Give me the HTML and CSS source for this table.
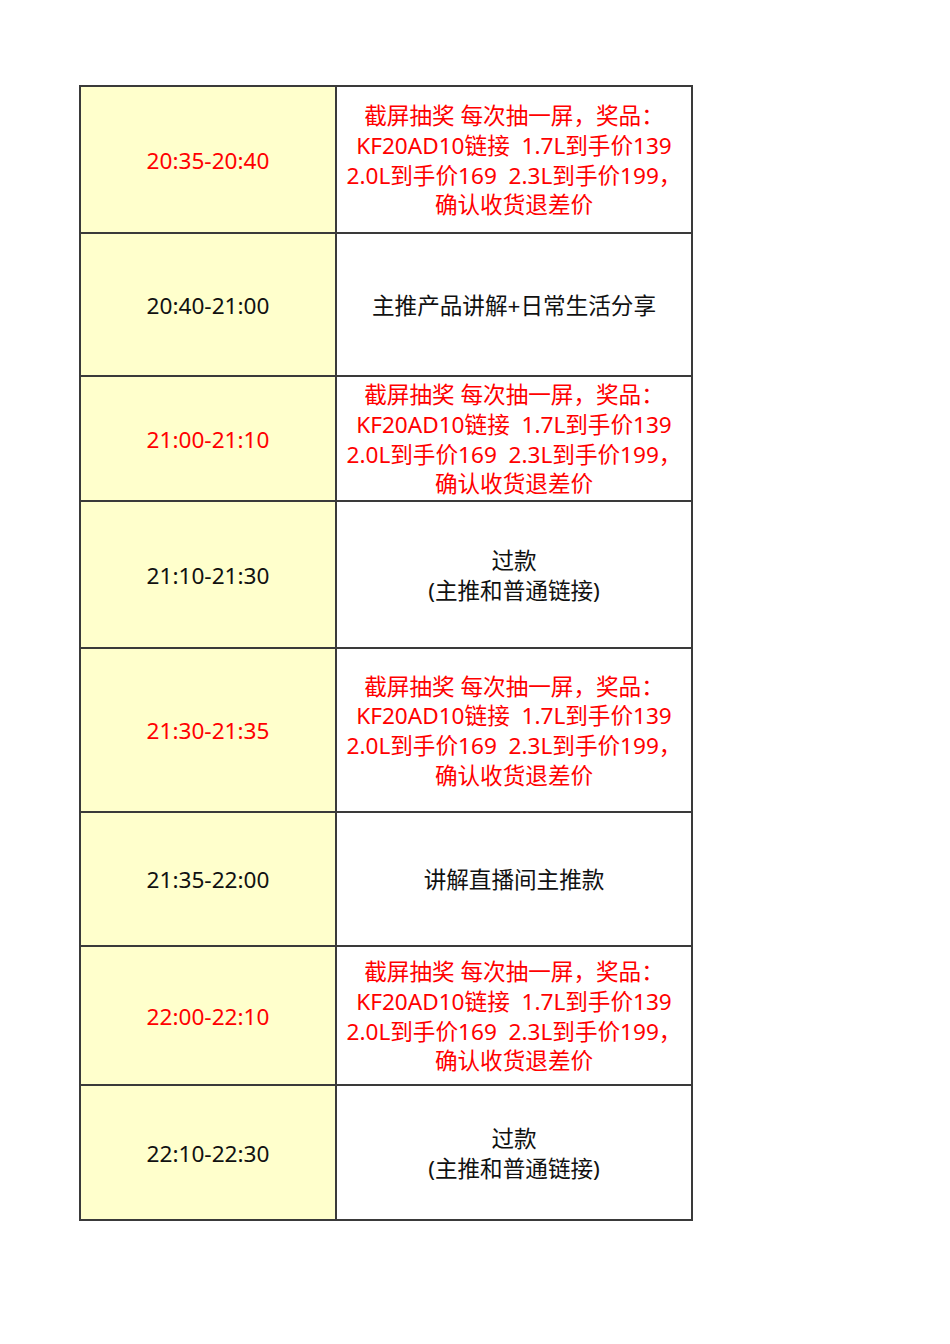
FILE: index.html
```html
<!DOCTYPE html>
<html lang="zh">
<head>
<meta charset="utf-8">
<link rel="stylesheet" href="styles.css">
</head>
<body>
<table class="schedule">
  <tr class="r1">
    <td class="time red">20:35-20:40</td>
    <td class="desc red">截屏抽奖 每次抽一屏，奖品：<br>KF20AD10链接&nbsp; 1.7L到手价139<br>2.0L到手价169&nbsp; 2.3L到手价199，<br>确认收货退差价</td>
  </tr>
  <tr class="r2">
    <td class="time">20:40-21:00</td>
    <td class="desc">主推产品讲解+日常生活分享</td>
  </tr>
  <tr class="r3">
    <td class="time red">21:00-21:10</td>
    <td class="desc red">截屏抽奖 每次抽一屏，奖品：<br>KF20AD10链接&nbsp; 1.7L到手价139<br>2.0L到手价169&nbsp; 2.3L到手价199，<br>确认收货退差价</td>
  </tr>
  <tr class="r4">
    <td class="time">21:10-21:30</td>
    <td class="desc">过款<br>(主推和普通链接)</td>
  </tr>
  <tr class="r5">
    <td class="time red">21:30-21:35</td>
    <td class="desc red">截屏抽奖 每次抽一屏，奖品：<br>KF20AD10链接&nbsp; 1.7L到手价139<br>2.0L到手价169&nbsp; 2.3L到手价199，<br>确认收货退差价</td>
  </tr>
  <tr class="r6">
    <td class="time">21:35-22:00</td>
    <td class="desc">讲解直播间主推款</td>
  </tr>
  <tr class="r7">
    <td class="time red">22:00-22:10</td>
    <td class="desc red">截屏抽奖 每次抽一屏，奖品：<br>KF20AD10链接&nbsp; 1.7L到手价139<br>2.0L到手价169&nbsp; 2.3L到手价199，<br>确认收货退差价</td>
  </tr>
  <tr class="r8">
    <td class="time">22:10-22:30</td>
    <td class="desc">过款<br>(主推和普通链接)</td>
  </tr>
</table>
</body>
</html>
```
FILE: styles.css
```css
html, body {
  margin: 0;
  padding: 0;
  background: #ffffff;
}
body {
  padding: 85px 0 0 79px;
  font-family: "Noto Sans", "Noto Sans CJK SC", sans-serif;
  font-size: 22.6px;
  color: #111;
}
.schedule {
  border-collapse: collapse;
  width: 614px;
  table-layout: fixed;
}
.schedule td {
  border: 2px solid #3a3a3a;
  padding: 2px 0 0 0;
  text-align: center;
  vertical-align: middle;
  line-height: 29.6px;
  white-space: nowrap;
}
.time {
  width: 254px;
  background: #ffffcc;
}
.desc {
  background: #ffffff;
}
.red {
  color: #ff0000;
}
.r1 { height: 147px; }
.r2 { height: 143px; }
.r3 { height: 125px; }
.r4 { height: 147px; }
.r5 { height: 164px; }
.r6 { height: 134px; }
.r7 { height: 139px; }
.r8 { height: 135px; }
```
